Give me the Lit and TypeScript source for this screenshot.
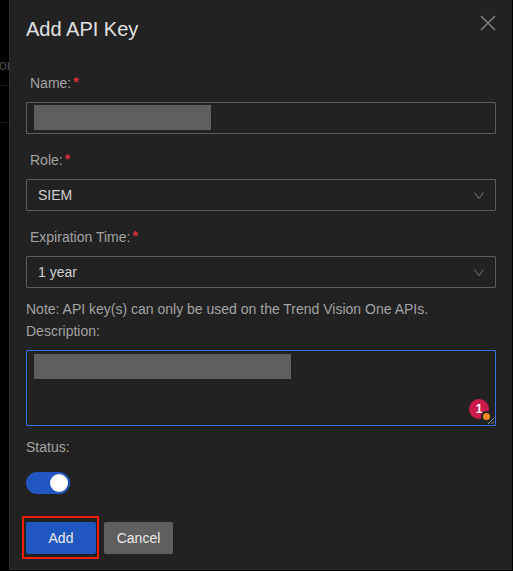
import { LitElement, html, css } from "lit";
import { customElement } from "lit/decorators.js";

const chevron = html`<svg class="chev" width="10" height="7" viewBox="0 0 10 7" fill="none"><path d="M0.5 0.5l4.5 6 4.5-6" stroke="#636363" stroke-width="1.2"/></svg>`;

@customElement("app-root")
export class AppRoot extends LitElement {
  static styles = css`
    :host { display: flex; width: 513px; height: 571px; background: #000; overflow: hidden; font-family: "Liberation Sans", Arial, sans-serif; font-size: 14px; color: #a3a3a3; }
    .side { width: 9px; flex: none; overflow: hidden; display: flex; flex-direction: column; }
    .side .word { margin-top: 57px; height: 28px; line-height: 17px; font-size: 14px; color: #4a4a4a; white-space: nowrap; text-indent: -1px; border-bottom: 1px solid #1c1c1c; }
    .side .row { height: 36px; border-bottom: 1px solid #1c1c1c; }
    .modal { width: 503px; height: 570px; flex: none; box-sizing: border-box; background: #222222; border-left: 1px solid #2e2e2e; border-bottom: 1px solid #2e2e2e; padding: 0 16px; position: relative; display: flex; flex-direction: column; }
    h1 { margin: 18px 0 0; height: 23px; line-height: 23px; font-size: 20px; font-weight: 400; color: #e2e2e2; }
    .close { position: absolute; right: 16px; top: 15px; width: 16px; height: 16px; }
    label { display: flex; height: 16px; line-height: 16px; padding-left: 4px; gap: 2px; }
    .req { color: #d9303f; font-size: 14px; line-height: 14px; font-weight: 700; }
    .l-name { margin-top: 34px; }
    .field { margin-top: 11px; height: 32px; box-sizing: border-box; width: 470px; border: 1px solid #5d5d5d; border-radius: 1px; display: flex; align-items: center; justify-content: space-between; padding: 0 11px; color: #d0d0d0; }
    .name { padding: 2px 7px; align-items: flex-start; }
    .mask { background: #5e5e5c; height: 25px; }
    .l-role { margin-top: 18px; }
    .note { margin-top: 13px; height: 16px; line-height: 16px; white-space: nowrap; }
    .d { margin-top: 6px; height: 16px; line-height: 16px; }
    .area { margin-top: 11px; height: 76px; box-sizing: border-box; width: 470px; border: 1px solid #3272e6; border-radius: 1px; padding: 3px 7px; position: relative; }
    .badge { position: absolute; right: 6px; bottom: 6px; width: 20px; height: 20px; border-radius: 50%; background: #cb1a4c; color: #fff; font-size: 12px; font-weight: 700; display: flex; align-items: center; justify-content: center; }
    .dot { position: absolute; right: 5px; bottom: 5px; width: 7px; height: 7px; border-radius: 50%; background: #f08c1e; box-shadow: 0 0 0 2px #222; }
    .grip { position: absolute; right: 0; bottom: 0; }
    .status { margin-top: 13px; height: 16px; line-height: 16px; }
    .toggle { margin-top: 17px; width: 44px; height: 22px; border-radius: 11px; background: #1f56c0; display: flex; align-items: center; justify-content: flex-end; padding: 0 2px; box-sizing: border-box; }
    .knob { width: 18px; height: 18px; border-radius: 50%; background: #fff; }
    .actions { margin-top: 28px; display: flex; gap: 8px; }
    button { height: 32px; border: 0; border-radius: 2px; font: inherit; color: #eaeaea; padding: 0; }
    .add { width: 70px; background: #1f56c0; position: relative; }
    .add::after { content: ""; position: absolute; inset: -6px -3px -5px -4px; border: 2px solid #f11f00; }
    .cancel { width: 69px; background: #5f5f5f; }
  `;

  render() {
    return html`
      <div class="side"><div class="word">on</div><div class="row"></div></div>
      <div class="modal">
        <h1>Add API Key</h1>
        <svg class="close" viewBox="0 0 16 16" fill="none"><path d="M1 1l14 14M15 1L1 15" stroke="#8a8a8a" stroke-width="1.3"/></svg>
        <label class="l-name">Name:<span class="req">*</span></label>
        <div class="field name"><div class="mask" style="width:177px"></div></div>
        <label class="l-role">Role:<span class="req">*</span></label>
        <div class="field">SIEM ${chevron}</div>
        <label class="l-role">Expiration Time:<span class="req">*</span></label>
        <div class="field">1 year ${chevron}</div>
        <div class="note">Note: API key(s) can only be used on the Trend Vision One APIs.</div>
        <div class="d">Description:</div>
        <div class="area">
          <div class="mask" style="width:257px"></div>
          <div class="badge">1</div>
          <div class="dot"></div>
          <svg class="grip" width="8" height="8" viewBox="0 0 8 8" fill="none"><path d="M1 7l6-6M4.5 7L7 4.5" stroke="#9a9a9a"/></svg>
        </div>
        <div class="status">Status:</div>
        <div class="toggle"><div class="knob"></div></div>
        <div class="actions">
          <button class="add">Add</button>
          <button class="cancel">Cancel</button>
        </div>
      </div>
    `;
  }
}
